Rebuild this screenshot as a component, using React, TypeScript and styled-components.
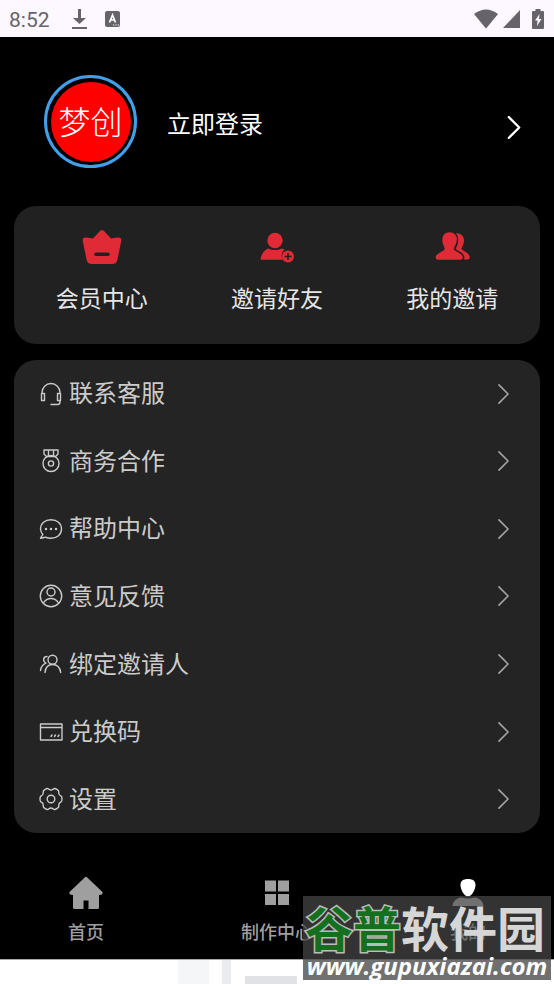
import React from "react";
import styled, { createGlobalStyle } from "styled-components";

const GlobalStyle = createGlobalStyle`
  *, *::before, *::after { box-sizing: border-box; }
  html, body, #root { height: 100%; }
  body {
    margin: 0;
    background: #fff;
    font-family: "Noto Sans CJK SC", sans-serif;
  }
  button { font: inherit; color: inherit; background: none; border: 0; padding: 0; margin: 0; cursor: pointer; }
  a { color: inherit; text-decoration: none; }
  svg { display: block; flex: none; }
`;

const Frame = styled.div`
  position: relative;
  min-height: 100%;
  display: flex;
`;

const Page = styled.div`
  display: flex;
  flex: 1;
  flex-direction: column;
  min-width: 0;
  background: #000;
`;

const StatusBar = styled.header`
  display: flex;
  align-items: center;
  height: 37px;
  padding: 0 10px 0 9px;
  background: #fdf7ff;
  color: #67636a;
`;

const Clock = styled.time`
  font: 400 21px/24px Roboto, sans-serif;
  width: 62px;
  padding-top: 2px;
`;

const StatusGroup = styled.div<{ $gap: number; $end?: boolean }>`
  display: flex;
  align-items: center;
  gap: ${(p) => p.$gap}px;
  margin-left: ${(p) => (p.$end ? "auto" : "0")};
`;

const Content = styled.main`
  display: flex;
  flex-direction: column;
  gap: 16px;
  padding: 0 14px;
`;

const Profile = styled.button`
  display: flex;
  align-items: center;
  width: 100%;
  padding: 38px 19px 22px 30px;
  color: #fff;
  text-align: left;
`;

const Avatar = styled.span`
  display: grid;
  place-items: center;
  width: 93px;
  height: 93px;
  border: 3px solid #429fe8;
  border-radius: 50%;
`;

const AvatarFill = styled.span`
  display: grid;
  place-items: center;
  width: 80px;
  height: 80px;
  padding-bottom: 4px;
  border-radius: 50%;
  background: #fe0000;
  font-size: 32px;
  line-height: 36px;
  font-weight: 300;
  white-space: nowrap;
`;

const LoginText = styled.span`
  flex: 1;
  margin: 2px 0 0 30px;
  font-size: 24px;
  line-height: 36px;
`;

const ProfileArrow = styled.span`
  padding-top: 12px;
`;

const Shortcuts = styled.nav`
  display: grid;
  grid-template-columns: repeat(3, 1fr);
  padding: 20px 0 30px;
  border-radius: 22px;
  background: #212121;
`;

const Shortcut = styled.button`
  display: flex;
  flex-direction: column;
  align-items: center;
  gap: 12px;
  color: #e6e6e6;
  font-size: 23px;
  line-height: 34px;

  svg { color: #e02a35; }
`;

const Menu = styled.ul`
  display: grid;
  grid-auto-rows: 1fr;
  min-height: 473px;
  margin: 0;
  padding: 0;
  list-style: none;
  border-radius: 22px;
  background: #242424;
`;

const MenuButton = styled.button`
  display: flex;
  align-items: center;
  gap: 6px;
  width: 100%;
  height: 100%;
  padding: 0 30px 0 25px;
  color: #cbcbcb;
  font-size: 24px;
  line-height: 36px;
  text-align: left;
`;

const MenuLabel = styled.span`
  flex: 1;
  padding-bottom: 3px;
`;

const TabBar = styled.nav`
  display: flex;
  justify-content: space-between;
  margin-top: auto;
  padding: 0 50px 14px;
`;

const Tab = styled.a<{ $active?: boolean }>`
  display: flex;
  flex-direction: column;
  align-items: center;
  gap: 6px;
  width: 72px;
  color: ${(p) => (p.$active ? "#fff" : "#9f9f9f")};
  font-size: 18px;
  line-height: 28px;
  font-weight: 500;
  white-space: nowrap;
`;

const Tail = styled.footer`
  display: flex;
  height: 25px;
  padding-left: 178px;
  border-top: 1px solid #aaa5a6;
  background: #fff;
`;

const TailBlock = styled.span<{ $w: number; $gap: number; $top?: number; $tone: string }>`
  width: ${(p) => p.$w}px;
  margin: ${(p) => p.$top ?? 0}px ${(p) => p.$gap}px 0 0;
  background: ${(p) => p.$tone};
`;

const Watermark = styled.div`
  position: absolute;
  right: 3px;
  bottom: 4px;
  display: flex;
  flex-direction: column;
  align-items: center;
  width: 248px;
  height: 84px;
  background: rgba(67, 67, 67, 0.76);
  white-space: nowrap;
  pointer-events: none;
`;

const WatermarkName = styled.span`
  padding-right: 4px;
  font-size: 48px;
  line-height: 60px;
  font-weight: 700;
  font-style: oblique 10deg;
  color: #d6d6d6;
`;

const WatermarkAccent = styled.span`
  color: #14701f;
  -webkit-text-stroke: 3px #b9bdb9;
  paint-order: stroke fill;
`;

const WatermarkUrl = styled.span`
  font: italic 700 24px/20px "Open Sans", sans-serif;
  color: #fff;
`;

const Chevron = ({ w, h, color, stroke }: { w: number; h: number; color: string; stroke: number }) => (
  <svg width={w} height={h} viewBox="0 0 12 22" fill="none" stroke={color} strokeWidth={stroke} strokeLinecap="round" strokeLinejoin="round" aria-hidden="true">
    <path d="M1 1l10 10L1 21" />
  </svg>
);

const shortcuts = [
  {
    label: "会员中心",
    icon: (
      <svg width="42" height="42" viewBox="0 0 42 42" fill="currentColor" aria-hidden="true">
        <path fillRule="evenodd" d="M18.500 5.500Q21 2.500 23.500 5.500L30 12.500 36.500 11.500Q41 11 40.200 15L36.500 33.500Q35.500 38 31 38H11Q6.500 38 5.500 33.500L1.800 15Q1 11 5.500 11.500L12 12.500ZM15 26.500a1.800 1.800 0 0 0 0 3.600h12a1.800 1.800 0 0 0 0-3.600Z" />
      </svg>
    ),
  },
  {
    label: "邀请好友",
    icon: (
      <svg width="42" height="42" viewBox="0 0 42 42" fill="currentColor" aria-hidden="true">
        <circle cx="19" cy="14.500" r="7.700" />
        <path d="M4.500 33.700C5 28 8.500 24 12 22.500Q19 25.500 26 22.500L28.500 23.500Q23.500 28 27 33.700Z" />
        <circle cx="32" cy="30.500" r="6" />
        <path d="M28.500 30.500h7M32 27v7" stroke="#212121" strokeWidth="1.500" />
      </svg>
    ),
  },
  {
    label: "我的邀请",
    icon: (
      <svg width="42" height="42" viewBox="0 0 42 42" fill="currentColor" aria-hidden="true">
        <path d="M23 7.500C29 6 33.500 9.500 33 15.500c-.3 3-2 5-2.500 7 0 2 7 4 8 7.500.7 2.500-.5 3.500-2 3.500h-4c-1-5-3-7-8-9-1-1 2.500-5 2.500-9S26 9.500 23 7.500Z" />
        <path stroke="#212121" strokeWidth="1.500" d="M18.500 5.500c5.500 0 8.500 4 8 9-.3 3.500-2 6-3 8-.3 2.500 8 3.500 9 8 .5 3-1 4-3 4H8c-3 0-4.500-1.500-4-4 1-4.500 9-5.500 9-8-.8-2-2.500-4.500-2.500-8 0-5.500 3-9 8-9Z" />
      </svg>
    ),
  },
];

const LineIcon = ({ children }: { children: React.ReactNode }) => (
  <svg width="24" height="24" viewBox="0 0 24 24" fill="none" stroke="currentColor" strokeWidth="1.400" strokeLinecap="round" strokeLinejoin="round" aria-hidden="true">
    {children}
  </svg>
);

const menu = [
  {
    label: "联系客服",
    icon: <><path d="M3 11.500v-1a9 9 0 0 1 18 0v1M2.500 11.500h3v7h-3zM18.500 11.500h3v7h-3zM21 18.500V20q0 2.500-2.500 2.500H12" /></>,
  },
  {
    label: "商务合作",
    icon: <><path d="M5 1h14v4l-2.500 2.500h-9L5 5zM9.500 1.500v5M14.500 1.500v5" /><circle cx="12" cy="14.500" r="8" /><circle cx="12" cy="14.500" r="2.600" /></>,
  },
  {
    label: "帮助中心",
    icon: <><path d="M1.500 21.200l2.300-3.700A9 9 0 0 1 1.500 12c0-5.500 4.500-9.300 10.500-9.300S22.500 6.500 22.500 12 18 21.300 12 21.300c-2.500 0-4-.4-5.500-1.100Z" /><path strokeWidth="2.500" d="M7 12h.01M12 12h.01M17 12h.01" /></>,
  },
  {
    label: "意见反馈",
    icon: <><circle cx="12" cy="12" r="10.700" /><circle cx="12" cy="8" r="4" /><path d="M4.500 19c3.500-6 11.500-6 15 0" /></>,
  },
  {
    label: "绑定邀请人",
    icon: <><circle cx="13.500" cy="7.800" r="4.500" /><path d="M6 20.500C6.500 15.500 9 12.500 13.500 12.500S21 15.500 21.700 20.500M8 4.500C4 4.500 3.500 9.500 7 11.200 3.500 12.500 2 15 1.500 18.500" /></>,
  },
  {
    label: "兑换码",
    icon: <><path d="M1.500 4h21.500v16H1.500zM1.500 7.500H23" /><path d="M12 16.500l1-1.500M15.500 16.500l1-1.500M19 16.500l1-1.500" /></>,
  },
  {
    label: "设置",
    icon: <><path d="M8 1.500Q9 1.300 10 2.300Q12 3.800 14 2.300Q15 1.300 16 1.500Q18 2 19.500 3.800Q20 5 19.800 6.300Q20 8.500 22 9Q23 9.500 23 12Q23 14.500 22 15Q20 15.500 19.800 17.700Q20 19 19.500 20.200Q18 22 16 22.500Q15 22.700 14 21.700Q12 20.200 10 21.700Q9 22.700 8 22.500Q6 22 4.500 20.200Q4 19 4.200 17.700Q4 15.500 2 15Q1 14.500 1 12Q1 9.500 2 9Q4 8.500 4.200 6.300Q4 5 4.500 3.800Q6 2 8 1.500Z" /><circle cx="12" cy="12" r="3.800" /></>,
  },
];

const tabs = [
  {
    label: "首页",
    active: false,
    icon: (
      <svg width="36" height="36" viewBox="0 0 36 36" fill="currentColor" aria-hidden="true">
        <path d="M16.500 2.700Q18 1 19.500 2.700L34.500 17Q35.500 20 31 20V32.500Q31 34 29.500 34H20.500V25.500H15.500V34H6.500Q5 34 5 32.500V20Q.5 20 1.500 17Z" />
      </svg>
    ),
  },
  {
    label: "制作中心",
    active: false,
    icon: (
      <svg width="36" height="36" viewBox="0 0 36 36" fill="currentColor" aria-hidden="true">
        <path d="M6 5.500h11v11H6zM19 5.500h11v11H19zM6 19h11v11H6zM19 19h11v11H19z" />
      </svg>
    ),
  },
  {
    label: "我的",
    active: true,
    icon: (
      <svg width="36" height="36" viewBox="0 0 36 36" fill="currentColor" aria-hidden="true">
        <path d="M18 4c5 0 7.500 2 7.500 6S22 21.500 18 21.500 10.500 14 10.500 10 13 4 18 4ZM2.500 31c0-5 5-8 9-8.500q6.500 2 13 0c4 .5 9 3.500 9 8.500Z" />
      </svg>
    ),
  },
];

export default function App() {
  return (
    <Frame>
      <GlobalStyle />
      <Page>
        <StatusBar>
          <Clock>8:52</Clock>
          <StatusGroup $gap={17}>
            <svg width="17" height="22" viewBox="0 0 17 22" fill="currentColor" aria-label="下载">
              <path d="M7 1h3v9h5l-6.500 6L2 10h5zM1 19h15v2H1z" />
            </svg>
            <svg width="16" height="16" viewBox="0 0 16 16" aria-hidden="true">
              <rect width="15" height="16" rx="2" fill="currentColor" />
              <path d="M4.500 11.500L7.500 4l3 7.500M5.500 9h4" fill="none" stroke="#fff" strokeWidth="1.700" />
              <path d="M8 14h1.200M10.500 14h1.200M12.800 14H14" stroke="#fff" strokeWidth="1.200" />
            </svg>
          </StatusGroup>
          <StatusGroup $gap={5} $end>
            <svg width="24" height="20" viewBox="0 0 24 20" fill="currentColor" aria-label="Wi-Fi">
              <path d="M0 5Q12-4 24 5L12.500 19Q12 19.500 11.500 19Z" />
            </svg>
            <svg width="24" height="20" viewBox="0 0 24 20" fill="currentColor" aria-label="信号">
              <path d="M17 1v18H0Z" />
            </svg>
            <svg width="12" height="20" viewBox="0 0 12 20" fill="currentColor" aria-label="电池">
              <path d="M3.500 0h5v2H11q1 0 1 1v16q0 1-1 1H1q-1 0-1-1V3q0-1 1-1h2.500z" />
              <path d="M7.500 5L3 11.500h2.500L5 17l4.500-7H7z" fill="#fdf7ff" />
            </svg>
          </StatusGroup>
        </StatusBar>

        <Content>
          <Profile>
            <Avatar><AvatarFill>梦创</AvatarFill></Avatar>
            <LoginText>立即登录</LoginText>
            <ProfileArrow><Chevron w={14} h={23} color="#fff" stroke={2.2} /></ProfileArrow>
          </Profile>

          <Shortcuts>
            {shortcuts.map((s) => (
              <Shortcut key={s.label}>{s.icon}{s.label}</Shortcut>
            ))}
          </Shortcuts>

          <Menu>
            {menu.map((m) => (
              <li key={m.label}>
                <MenuButton>
                  <LineIcon>{m.icon}</LineIcon>
                  <MenuLabel>{m.label}</MenuLabel>
                  <Chevron w={13} h={20} color="#a3a3a3" stroke={1.8} />
                </MenuButton>
              </li>
            ))}
          </Menu>
        </Content>

        <TabBar>
          {tabs.map((t) => (
            <Tab key={t.label} href="#" $active={t.active}>{t.icon}{t.label}</Tab>
          ))}
        </TabBar>
        <Tail>
          <TailBlock $w={31} $gap={13} $tone="#f5f6f8" />
          <TailBlock $w={9} $gap={14} $tone="#ebecef" />
          <TailBlock $w={52} $gap={0} $top={16} $tone="#e0e2e6" />
        </Tail>
      </Page>
      <Watermark>
        <WatermarkName><WatermarkAccent>谷普</WatermarkAccent>软件园</WatermarkName>
        <WatermarkUrl>www.gupuxiazai.com</WatermarkUrl>
      </Watermark>
    </Frame>
  );
}
